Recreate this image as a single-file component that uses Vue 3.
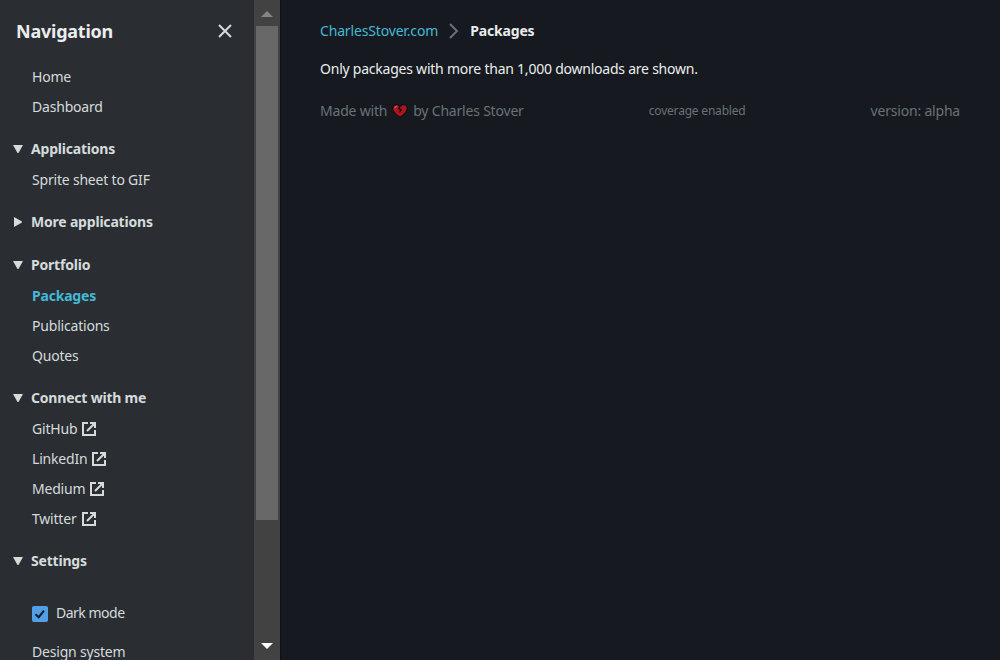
<script setup>
const top = [{ label: 'Home' }, { label: 'Dashboard' }]
const sections = [
  { title: 'Applications', open: true, items: [{ label: 'Sprite sheet to GIF' }] },
  { title: 'More applications', open: false, items: [] },
  {
    title: 'Portfolio',
    open: true,
    items: [{ label: 'Packages', active: true }, { label: 'Publications' }, { label: 'Quotes' }],
  },
  {
    title: 'Connect with me',
    open: true,
    items: [
      { label: 'GitHub', external: true },
      { label: 'LinkedIn', external: true },
      { label: 'Medium', external: true },
      { label: 'Twitter', external: true },
    ],
  },
  { title: 'Settings', open: true, items: [] },
]
</script>

<template>
  <div class="page">
    <aside class="sidebar">
      <nav class="panel">
        <header class="head">
          <h2>Navigation</h2>
          <svg class="close" width="16" height="16" viewBox="0 0 16 16">
            <path d="M2 2l12 12M14 2L2 14" fill="none" stroke="#d5dbdb" stroke-width="2" />
          </svg>
        </header>
        <ul>
          <li v-for="item in top" :key="item.label">{{ item.label }}</li>
        </ul>
        <section v-for="s in sections" :key="s.title" :class="{ collapsed: !s.open }">
          <h3>
            <svg width="12" height="12" viewBox="0 0 12 12" fill="#d5dbdb">
              <path v-if="s.open" d="M1 2h10L6.8 9.5Q6 10.5 5.2 9.5z" />
              <path v-else d="M2 1v10L9.6 6.7Q10.6 6 9.6 5.3z" />
            </svg>
            <span>{{ s.title }}</span>
          </h3>
          <ul v-if="s.items.length">
            <li v-for="item in s.items" :key="item.label" :class="{ active: item.active }">
              <span>{{ item.label }}</span>
              <svg v-if="item.external" class="ext" width="16" height="16" viewBox="0 0 16 16">
                <path
                  d="M7 2H2v12h12V9M9 2h5v5M14 2L6 10"
                  fill="none"
                  stroke="#d5dbdb"
                  stroke-width="2"
                />
              </svg>
            </li>
          </ul>
        </section>
        <label class="toggle">
          <span class="box">
            <svg width="16" height="16" viewBox="0 0 16 16">
              <path d="M3.5 8.2l3.2 3L12 4.6" fill="none" stroke="#0f1b2a" stroke-width="2" />
            </svg>
          </span>
          <span>Dark mode</span>
        </label>
        <ul class="last"><li>Design system</li></ul>
      </nav>
      <div class="scrollbar">
        <svg width="12" height="6" viewBox="0 0 12 6"><path d="M6 0l6 6H0z" fill="#858585" /></svg>
        <div class="thumb"></div>
        <svg class="down" width="12" height="6" viewBox="0 0 12 6"><path d="M0 0h12L6 6z" fill="#fff" /></svg>
      </div>
    </aside>
    <main>
      <div class="crumbs">
        <a>CharlesStover.com</a>
        <svg width="16" height="16" viewBox="0 0 16 16">
          <path d="M4 1l7 7-7 7" fill="none" stroke="#687078" stroke-width="2" />
        </svg>
        <b>Packages</b>
      </div>
      <p>Only packages with more than 1,000 downloads are shown.</p>
      <footer>
        <span class="made">
          Made with
          <svg width="16" height="14" viewBox="0 0 16 14">
            <path
              d="M8 13.4C5 10.8 .8 8 .8 4.3C.8 .2 5.8-.6 8 2.6C10.2-.6 15.2 .2 15.2 4.3C15.2 8 11 10.8 8 13.4z"
              fill="#a81622"
              stroke="#0b0709"
              stroke-width="1"
            />
            <path d="M8 2.5L6.6 4.6l2.6 1.2L7.4 8.4" fill="none" stroke="#180609" stroke-width="1.2" />
            <path d="M2.8 4.4Q3 2.6 4.8 2.3" fill="none" stroke="#cf5a60" stroke-width="1.2" />
          </svg>
          by Charles Stover
        </span>
        <small>coverage enabled</small>
        <span>version: alpha</span>
      </footer>
    </main>
  </div>
</template>

<style>
body {
  margin: 0;
  background: #16191f;
}
</style>

<style scoped>
.page {
  display: flex;
  height: 660px;
  overflow: hidden;
  font-family: 'Noto Sans', sans-serif;
  font-size: 14px;
  line-height: 30px;
  letter-spacing: -0.2px;
  color: #d5dbdb;
  background: #16191f;
}
.sidebar {
  display: flex;
  flex: none;
  width: 280px;
  height: 660px;
  background: #2a2e33;
  box-shadow: 1px 0 1px #0d1015;
}
.panel {
  flex: 1;
  overflow: hidden;
}
.head {
  display: flex;
  align-items: center;
  justify-content: space-between;
  height: 62px;
  padding: 0 21px 0 16px;
}
h2 {
  margin: 0;
  font-size: 18px;
  letter-spacing: -0.23px;
  color: #eaeded;
}
ul {
  margin: 0;
  padding: 0 0 0 32px;
  list-style: none;
}
li {
  display: flex;
  align-items: center;
  height: 30px;
}
.active {
  font-weight: 700;
  color: #44b9d6;
}
.ext {
  margin-left: 4px;
}
section {
  margin-top: 12px;
}
section.collapsed {
  margin-bottom: 13px;
}
section.collapsed + section {
  margin-top: 0;
}
h3 {
  display: flex;
  align-items: center;
  gap: 7px;
  height: 30px;
  margin: 0 0 1px;
  padding-left: 12px;
  font-size: 14px;
}
section.collapsed h3 {
  margin-bottom: 0;
}
.toggle {
  display: flex;
  align-items: center;
  gap: 8px;
  height: 30px;
  margin-top: 22px;
  padding-left: 32px;
  letter-spacing: -0.5px;
}
.box {
  width: 16px;
  height: 16px;
  margin-top: 2px;
  border-radius: 2px;
  background: #539fe5;
}
.box svg {
  display: block;
}
.last {
  margin-top: 9px;
}
.scrollbar {
  display: flex;
  flex-direction: column;
  align-items: center;
  box-sizing: border-box;
  width: 26px;
  height: 660px;
  padding: 11px 0;
  background: #424242;
}
.thumb {
  width: 22px;
  height: 494px;
  margin-top: 9px;
  background: #686868;
}
.down {
  margin-top: auto;
}
main {
  flex: 1;
  padding: 16px 40px 0;
}
.crumbs {
  display: flex;
  align-items: center;
  gap: 8px;
  letter-spacing: -0.16px;
}
.crumbs a {
  color: #44b9d6;
}
p {
  margin: 8px 0 12px;
  letter-spacing: -0.23px;
  color: #eaeded;
}
.crumbs b {
  color: #eaeded;
}
footer {
  display: flex;
  align-items: center;
  justify-content: space-between;
  color: #687376;
}
.made {
  display: flex;
  align-items: center;
  gap: 5px;
}
small {
  font-size: 12px;
}
</style>
